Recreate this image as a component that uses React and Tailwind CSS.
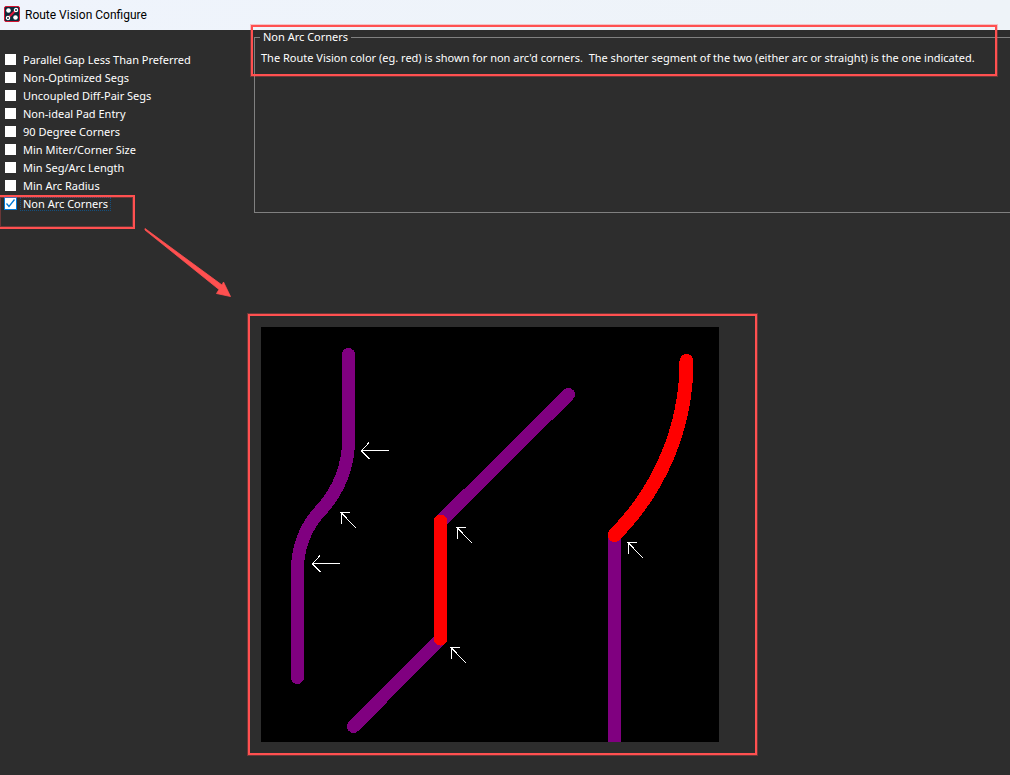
import { useState } from "react";

const CHECKS = [
  "Parallel Gap Less Than Preferred",
  "Non-Optimized Segs",
  "Uncoupled Diff-Pair Segs",
  "Non-ideal Pad Entry",
  "90 Degree Corners",
  "Min Miter/Corner Size",
  "Min Seg/Arc Length",
  "Min Arc Radius",
  "Non Arc Corners",
];

const Logo = () => (
  <svg width="16" height="16" viewBox="0 0 16 16" aria-hidden="true">
    <rect x="0.5" y="0.5" width="15" height="15" rx="1.5" fill="#0b2a3a" stroke="#d3122f" />
    <path d="M5 11 L11 5" stroke="#e0183a" strokeWidth="2" />
    <circle cx="4.5" cy="4.5" r="2.3" fill="#fff" />
    <circle cx="11.5" cy="11.5" r="2.3" fill="#fff" />
    <circle cx="12" cy="4" r="1.6" fill="#0b2a3a" stroke="#fff" strokeWidth="1.3" />
    <circle cx="4" cy="12" r="1.6" fill="#0b2a3a" stroke="#fff" strokeWidth="1.3" />
  </svg>
);

const TitleBar = () => (
  <header className="flex h-[30px] items-center gap-[5px] bg-gradient-to-r from-[#eff4fc] to-[#eef3f8] px-1 pb-0.5">
    <Logo />
    <h1 className="pt-0.5 font-[Roboto,sans-serif] text-xs text-black">Route Vision Configure</h1>
  </header>
);

const CheckRow = ({ label, checked, focused, onChange }) => (
  <li>
    <label className="flex h-[18px] items-start gap-[3px] pt-0.5">
      <span className="relative flex">
        <input
          type="checkbox"
          checked={checked}
          onChange={onChange}
          className="peer size-[13px] appearance-none border border-[#2d2d2d] bg-white checked:border-[#0078d7]"
        />
        <svg
          viewBox="0 0 13 13"
          className="pointer-events-none absolute inset-0 hidden size-[13px] peer-checked:block"
          aria-hidden="true"
        >
          <path d="M2.5 6.5 L5 9.5 L10.5 2.5" fill="none" stroke="#0078d7" strokeWidth="1.3" />
        </svg>
      </span>
      <span
        className={
          focused
            ? "border border-dotted border-[#14507f] px-0.5 leading-3"
            : "border border-transparent px-0.5 leading-3"
        }
      >
        {label}
      </span>
    </label>
  </li>
);

// white pointers next to the corners
const ArrowLeft = ({ x, y }) => (
  <path d={`M${x} ${y}h28 M${x + 8} ${y - 8}l-7.5 8.5l8 8`} />
);

const ArrowUpLeft = ({ x, y }) => (
  <path d={`M${x} ${y}h10 M${x + 1.5} ${y}v11 M${x + 1} ${y}l15 15.5`} />
);

const CornerDiagram = () => (
  <svg
    width="458"
    height="415"
    viewBox="0 0 458 415"
    shapeRendering="crispEdges"
    role="img"
    aria-label="Non arc corners example"
    className="block bg-black"
  >
    <g fill="none" strokeWidth="13" strokeLinecap="round">
      <g stroke="#800080">
        <path d="M87.5 27.5 V108 A104 104 0 0 1 61 182 A88 88 0 0 0 36.5 241 V350.5" />
        <path d="M307.5 67.5 L180 194" />
        <path d="M179.5 312 L92.5 399.5" />
        <path d="M353.5 208 V425" />
      </g>
      <g stroke="#ff0000">
        <path d="M179.5 194 V312" />
        <path d="M425.5 34 A246 246 0 0 1 353.5 208" strokeWidth="14" />
      </g>
    </g>
    <g fill="none" stroke="#fff" strokeWidth="1">
      <ArrowLeft x={100} y={123.5} />
      <ArrowLeft x={51} y={236.5} />
      <ArrowUpLeft x={79} y={185.5} />
      <ArrowUpLeft x={195} y={200.5} />
      <ArrowUpLeft x={189} y={320.5} />
      <ArrowUpLeft x={366} y={215.5} />
    </g>
  </svg>
);

const App = () => {
  const [selected, setSelected] = useState(["Non Arc Corners"]);
  const [current, setCurrent] = useState("Non Arc Corners");

  const toggle = (label) => {
    setCurrent(label);
    setSelected((prev) =>
      prev.includes(label) ? prev.filter((l) => l !== label) : [...prev, label]
    );
  };

  return (
    <div className="min-h-screen overflow-hidden bg-[#2d2d2d] font-['Noto_Sans','Open_Sans',sans-serif] text-[11px] text-white">
      <TitleBar />
      <main className="flex">
        {/* Check list */}
        <aside className="relative w-[248px] shrink-0 pt-[21px] pl-1">
          <ul>
            {CHECKS.map((label) => (
              <CheckRow
                key={label}
                label={label}
                checked={selected.includes(label)}
                focused={current === label}
                onChange={() => toggle(label)}
              />
            ))}
          </ul>
          <div className="pointer-events-none absolute top-[165px] -left-0.5 h-[34px] w-[137px] border-2 border-[#ff5050] ring-1 ring-[#ff5050]/30 ring-inset" />
          <svg
            width="90"
            height="70"
            viewBox="0 0 90 70"
            className="pointer-events-none absolute top-[198px] left-36"
            aria-hidden="true"
          >
            <path
              d="M1 0.5 L78 57 L79.5 54 L86.5 68.5 L72.5 65.5 L75 61.5 L1 2 Z"
              fill="#ff5050"
              stroke="#ff5050"
              strokeWidth="0.8"
              strokeLinejoin="round"
            />
          </svg>
        </aside>

        {/* Description and preview */}
        <section className="min-w-0 flex-1">
          <div className="relative ml-1.5">
            <fieldset className="h-[183px] border border-r-0 border-[#808080] pl-1.5">
              <legend className="-ml-px px-[3px] leading-[14px]">{current}</legend>
              <p className="mt-1.5 leading-4 whitespace-pre-wrap">
                {"The Route Vision color (eg. red) is shown for non arc'd corners.  The shorter segment of the two (either arc or straight) is the one indicated."}
              </p>
            </fieldset>
            <div className="pointer-events-none absolute -top-[5px] right-[13px] -left-[3px] h-[51px] border-2 border-[#ff5050] ring-1 ring-[#ff5050]/30" />
          </div>
          <div className="mt-[101px] w-fit border-2 border-[#ff5050] py-[11px] pr-9 pl-[11px] ring-1 ring-[#ff5050]/30">
            <CornerDiagram />
          </div>
        </section>
      </main>
    </div>
  );
};

export default App;
